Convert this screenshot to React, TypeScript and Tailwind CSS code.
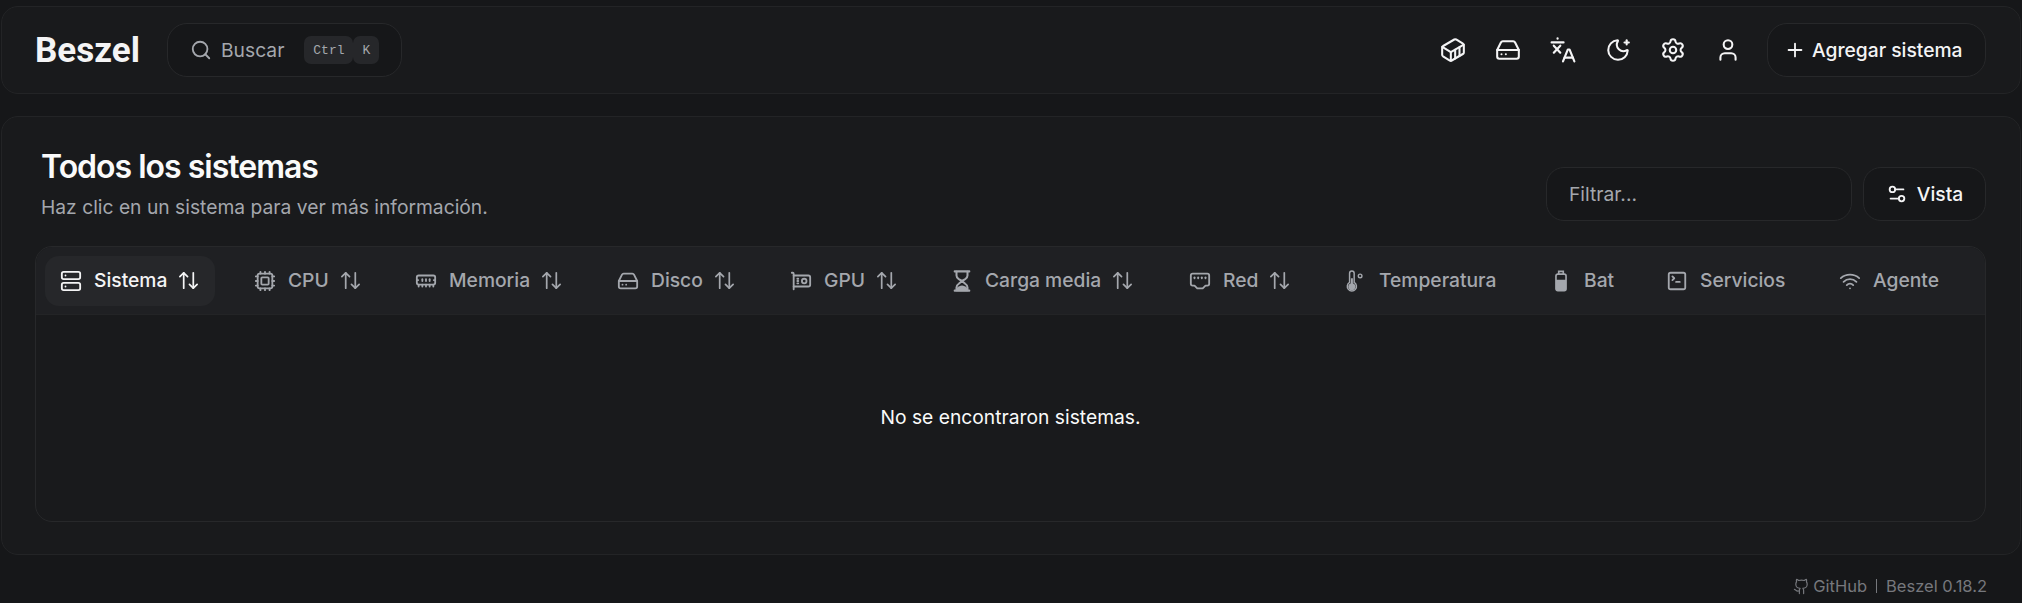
import { ArrowUpDown, Container, Cpu, EthernetPort, HardDrive, MemoryStick, MoonStar, Plus, Search, Server, Settings, Settings2, SquareTerminal, User, Wifi } from "lucide-react";
import type { ReactNode } from "react";

const GitHubIcon = () => (
  <svg viewBox="0 0 24 24" fill="none" stroke="currentColor" strokeWidth="1.7" strokeLinecap="round" strokeLinejoin="round" className="h-[17px] w-[17px]">
    <path d="M15 22v-4a4.8 4.8 0 0 0-1-3.5c3 0 6-2 6-5.5.08-1.25-.27-2.48-1-3.5.28-1.15.28-2.35 0-3.5 0 0-1 0-3 1.5-2.64-.5-5.36-.5-8 0C6 2 5 2 5 2c-.3 1.15-.3 2.35 0 3.5A5.403 5.403 0 0 0 4 9c0 3.5 3 5.5 6 5.5-.39.49-.68 1.05-.85 1.65-.17.6-.22 1.23-.15 1.85v4" />
    <path d="M9 18c-4.51 2-5-2-7-2" />
  </svg>
);

const TranslateIcon = () => (
  <svg viewBox="0 0 24 24" fill="none" stroke="currentColor" strokeWidth="2" strokeLinecap="round" strokeLinejoin="round" className="h-[26px] w-[26px]">
    <path d="M1.5 5h11" />
    <path d="M7 1.2v.3" />
    <path d="M3.5 8l6 6.5" />
    <path d="M9.5 8l-6 6.5" />
    <path d="M12 22.5l4.5-11 1.5 0 4.5 11" />
    <path d="M13.5 19h7.5" />
  </svg>
);

const GpuIcon = () => (
  <svg viewBox="0 0 24 24" fill="none" stroke="currentColor" strokeWidth="2" strokeLinecap="round" strokeLinejoin="round" className="h-[22px] w-[22px]">
    <path d="M2 3h1a1 1 0 0 1 1 1v17" />
    <path d="M4 6h16a2 2 0 0 1 2 2v8a2 2 0 0 1-2 2H4" />
    <circle cx="15.5" cy="12" r="2.5" />
    <path d="M8 9.5h1M8 12h1M8 14.5h1" />
  </svg>
);

const HourglassIcon = () => (
  <svg viewBox="0 0 24 24" fill="none" stroke="currentColor" strokeWidth="2.2" strokeLinecap="round" strokeLinejoin="round" className="h-[24px] w-[22px]">
    <path d="M4 1.5h16M4 22.5h16" />
    <path d="M6 2v4c0 1.8 1 3 2.5 4L12 12l3.5-2C17 9 18 7.8 18 6V2" />
    <path d="M6 22v-3c0-1.8 1-3 2.5-4L12 12l3.5 3c1.5 1 2.5 2.2 2.5 4v3z" />
    <path d="M6.5 22v-2.5c1.5-1.5 3.5-2.5 5.5-2.5s4 1 5.5 2.5V22z" fill="currentColor" stroke="none" />
  </svg>
);

const ThermometerIcon = () => (
  <svg viewBox="0 0 24 24" fill="none" className="h-[22px] w-[22px]">
    <path d="M5 3.5a2.5 2.5 0 0 1 5 0v10.1a5 5 0 1 1-5 0z" stroke="currentColor" strokeWidth="1.6" />
    <path d="M6.4 9h2.2v5.4a3.9 3.9 0 1 1-2.2 0z" fill="currentColor" />
    <circle cx="16.5" cy="6.5" r="2" stroke="currentColor" strokeWidth="1.5" />
  </svg>
);

const BatteryIcon = () => (
  <svg viewBox="0 0 24 24" fill="none" className="h-[22px] w-[22px]">
    <path d="M9.5 4.5v-3h5v3" stroke="currentColor" strokeWidth="1.8" />
    <rect x="6.5" y="4.5" width="11" height="18" rx="2" stroke="currentColor" strokeWidth="1.8" />
    <path d="M6.5 10.5h11v10.5a1.5 1.5 0 0 1-1.5 1.5H8a1.5 1.5 0 0 1-1.5-1.5z" fill="currentColor" />
  </svg>
);

type Col = { label: string; icon: ReactNode; width: string; sort?: boolean; active?: boolean };

const s = "h-[22px] w-[22px]";
const cols: Col[] = [
  { label: "Sistema", icon: <Server className={s} strokeWidth={2} />, width: "w-[194px]", sort: true, active: true },
  { label: "CPU", icon: <Cpu className={s} strokeWidth={2} />, width: "w-[161px]", sort: true },
  { label: "Memoria", icon: <MemoryStick className={s} strokeWidth={2} />, width: "w-[202px]", sort: true },
  { label: "Disco", icon: <HardDrive className={s} strokeWidth={2} />, width: "w-[173px]", sort: true },
  { label: "GPU", icon: <GpuIcon />, width: "w-[161px]", sort: true },
  { label: "Carga media", icon: <HourglassIcon />, width: "w-[238px]", sort: true },
  { label: "Red", icon: <EthernetPort className={s} strokeWidth={2} />, width: "w-[156px]", sort: true },
  { label: "Temperatura", icon: <ThermometerIcon />, width: "w-[205px]" },
  { label: "Bat", icon: <BatteryIcon />, width: "w-[116px]" },
  { label: "Servicios", icon: <SquareTerminal className={s} strokeWidth={2} />, width: "w-[173px]" },
  { label: "Agente", icon: <Wifi className={s} strokeWidth={2} />, width: "w-[130px]" },
];

const navIcon = "h-[26px] w-[26px]";
const navButtons: ReactNode[] = [
  <Container className={navIcon} strokeWidth={1.9} />,
  <HardDrive className={navIcon} strokeWidth={1.9} />,
  <TranslateIcon />,
  <MoonStar className={navIcon} strokeWidth={1.9} />,
  <Settings className={navIcon} strokeWidth={1.9} />,
  <User className={navIcon} strokeWidth={1.9} />,
];

export default function App() {
  return (
    <div className="h-[603px] overflow-hidden bg-[#161719] px-px pt-[6px] font-['Inter',sans-serif] text-[19.25px] text-[#f4f4f5]">
      <header className="flex h-[88px] items-center rounded-[17px] border border-[#232426] bg-[#191a1c] pl-[33px] pr-[34px]">
        <div className="w-[132px] font-['Roboto',sans-serif] text-[35px] font-bold leading-none text-[#f4f4f5]">Beszel</div>
        <button className="flex h-[54px] w-[235px] items-center rounded-[20px] border border-[#27282a] bg-[#161719] pl-[22px] text-[#a4a7ad]">
          <Search className="h-[22px] w-[22px]" strokeWidth={2} />
          <span className="ml-[9px]">Buscar</span>
          <span className="ml-[20px] flex font-['Liberation_Mono',monospace] text-[13px] leading-none text-[#a4a7ad]">
            <span className="flex h-[28px] w-[49px] items-center justify-center rounded-[7px] bg-[#26272a]">Ctrl</span>
            <span className="flex h-[28px] w-[26px] items-center justify-center rounded-[7px] bg-[#26272a]">K</span>
          </span>
        </button>
        <div className="ml-auto flex items-center gap-px">
          {navButtons.map((icon, i) => (
            <button key={i} className="flex h-[54px] w-[54px] items-center justify-center text-[#f4f4f5]">{icon}</button>
          ))}
          <button className="ml-[11px] flex h-[54px] w-[219px] items-center gap-[6px] rounded-[20px] border border-[#27282a] bg-[#161719] pl-[16px] font-medium">
            <Plus className="h-[22px] w-[22px]" strokeWidth={2} />
            Agregar sistema
          </button>
        </div>
      </header>

      <main className="mt-[22px] h-[439px] rounded-[17px] border border-[#232426] bg-[#191a1c] pl-[33px] pr-[34px]">
        <div className="flex h-[129px] items-end pb-[25px]">
          <div className="pl-[6px]">
            <h1 className="text-[32px] font-semibold leading-[40px] tracking-[-1px] text-[#fafafa]">Todos los sistemas</h1>
            <p className="mt-[6px] text-[#a4a7ad] leading-[28px]">Haz clic en un sistema para ver más información.</p>
          </div>
          <div className="ml-auto flex gap-[11px]">
            <div className="flex h-[54px] w-[306px] items-center rounded-[18px] border border-[#27282a] bg-[#161719] pl-[22px] text-[#a4a7ad]">Filtrar...</div>
            <button className="flex h-[54px] w-[123px] items-center justify-center gap-[9px] rounded-[18px] border border-[#27282a] bg-[#161719] font-medium">
              <Settings2 className="h-[22px] w-[22px]" strokeWidth={2} />
              Vista
            </button>
          </div>
        </div>

        <div className="h-[276px] overflow-hidden rounded-[17px] border border-[#27282a]">
          <div className="flex h-[67px] items-center bg-[#1f2023] pl-[9px]">
            {cols.map((c) => (
              <div key={c.label} className={`shrink-0 ${c.width}`}>
                <div className={`flex h-[50px] w-fit items-center rounded-[14px] pl-[15px] pr-[15px] font-medium ${c.active ? "bg-[#26272a] text-[#f4f4f5]" : "text-[#a4a7ad]"}`}>
                  {c.icon}
                  <span className="ml-[12px]">{c.label}</span>
                  {c.sort && <ArrowUpDown className="ml-[10px] h-[23px] w-[23px]" strokeWidth={1.8} />}
                </div>
              </div>
            ))}
          </div>
          <div className="flex h-[207px] items-center justify-center border-t border-[#232426] pb-[2px] text-[#fafafa]">No se encontraron sistemas.</div>
        </div>
      </main>

      <footer className="mt-[21px] flex items-center justify-end pr-[34px] text-[16.5px] leading-[20px] text-[#76787d]">
        <GitHubIcon />
        <span className="ml-[3px]">GitHub</span>
        <span className="mx-[9px] h-[14px] w-px bg-[#76787d]" />
        <span>Beszel 0.18.2</span>
      </footer>
    </div>
  );
}
